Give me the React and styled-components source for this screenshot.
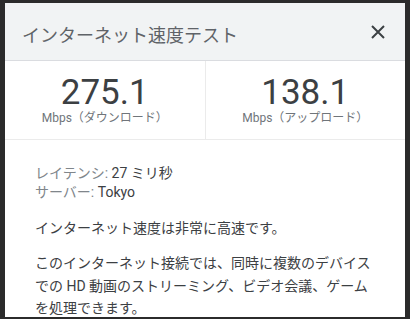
import React from "react";
import styled, { createGlobalStyle } from "styled-components";

const GlobalStyle = createGlobalStyle`
  html, body {
    margin: 0;
    padding: 0;
    background: #2b2b2b;
  }
  body {
    font-family: Roboto, "Noto Sans CJK JP", "Noto Sans", sans-serif;
  }
`;

const results = [
  { value: "275.1", label: "Mbps（ダウンロード）" },
  { value: "138.1", label: "Mbps（アップロード）" },
];

const App = () => {
  return (
    <>
      <GlobalStyle />
      <Frame>
        <Panel>
          <Header>
            <Title>インターネット速度テスト</Title>
            <CloseButton aria-label="閉じる">
              <svg width="14" height="14" viewBox="0 0 14 14">
                <path
                  d="M1 1 L13 13 M13 1 L1 13"
                  stroke="#3c4043"
                  strokeWidth="2"
                  fill="none"
                />
              </svg>
            </CloseButton>
          </Header>
          <Metrics>
            {results.map((r, i) => (
              <Metric key={r.label} divider={i === 0}>
                <Value>{r.value}</Value>
                <Unit>{r.label}</Unit>
              </Metric>
            ))}
          </Metrics>
          <Body>
            <Stats>
              <StatLine>
                <StatKey>レイテンシ: </StatKey>27 ミリ秒
              </StatLine>
              <StatLine>
                <StatKey>サーバー: </StatKey>Tokyo
              </StatLine>
            </Stats>
            <Summary>インターネット速度は非常に高速です。</Summary>
            <Paragraph>
              このインターネット接続では、同時に複数のデバイスでの HD
              動画のストリーミング、ビデオ会議、ゲームを処理できます。
            </Paragraph>
          </Body>
        </Panel>
      </Frame>
    </>
  );
};

export default App;

const Frame = styled.div`
  width: 410px;
  height: 319px;
  box-sizing: border-box;
  padding: 3px 5px 2px 5px;
  overflow: hidden;
`;

const Panel = styled.div`
  background: #fff;
  height: 100%;
  overflow: hidden;
`;

const Header = styled.div`
  display: flex;
  justify-content: space-between;
  align-items: flex-start;
  height: 58px;
  box-sizing: border-box;
  padding: 21px 20px 0 17px;
  background: #f1f3f4;
  border-bottom: 1px solid #dadce0;
`;

const Title = styled.div`
  font-size: 18px;
  line-height: 24px;
  color: #5f6368;
`;

const CloseButton = styled.button`
  border: none;
  background: none;
  padding: 0;
  margin-top: 1px;
  width: 14px;
  height: 14px;
  display: flex;
  cursor: pointer;
`;

const Metrics = styled.div`
  display: flex;
  border-bottom: 1px solid #ebebeb;
`;

const Metric = styled.div`
  flex: 1;
  display: flex;
  flex-direction: column;
  align-items: center;
  padding: 15px 0 13px;
  border-right: ${(p) => (p.divider ? "1px solid #ebebeb" : "none")};
`;

const Value = styled.div`
  font-size: 35px;
  line-height: 34px;
  color: #3c4043;
`;

const Unit = styled.div`
  font-size: 12px;
  line-height: 16px;
  color: #70757a;
`;

const Body = styled.div`
  padding: 24px 30px 0 30px;
  color: #3c4043;
  font-size: 14px;
`;

const Stats = styled.div`
  display: flex;
  flex-direction: column;
`;

const StatLine = styled.div`
  line-height: 19px;
`;

const StatKey = styled.span`
  color: #80868b;
`;

const Summary = styled.p`
  margin: 15px 0 0;
  line-height: 22px;
`;

const Paragraph = styled.p`
  margin: 13px 0 0;
  line-height: 22.5px;
`;
